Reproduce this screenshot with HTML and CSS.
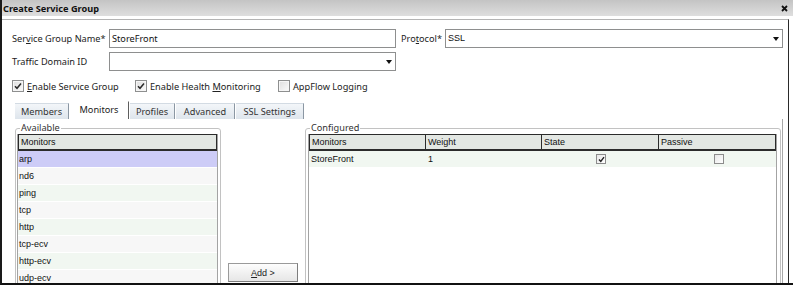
FILE: index.html
```html
<!DOCTYPE html>
<html lang="en">
<head>
    <meta charset="UTF-8">
    <title>Create Service Group</title>
    <link rel="stylesheet" href="styles.css">
</head>
<body>
    <div class="dialog">
        <div class="titlebar">
            <span class="title">Create Service Group</span>
            <svg class="close" width="7" height="7" viewBox="0 0 7 7"><path d="M1 1L6 6M6 1L1 6" stroke="#111" stroke-width="1.8"/></svg>
        </div>

        <div class="content">
            <div class="form-row">
                <label class="field-label">Ser<u>v</u>ice Group Name*</label>
                <div class="textbox name-box">StoreFront</div>
                <label class="proto-label">Pro<u>t</u>ocol*</label>
                <div class="textbox dropdown proto-box"><span class="ssl">SSL</span><span class="arrow"></span></div>
            </div>
            <div class="form-row">
                <label class="field-label">Traffic Domain ID</label>
                <div class="textbox dropdown domain-box"><span></span><span class="arrow"></span></div>
            </div>

            <div class="checks">
                <div class="check check-service">
                    <span class="checkbox"><svg width="8" height="8" viewBox="0 0 8 8"><path d="M1 4.2L3 6.3L7 1.5" fill="none" stroke="#2a2a2a" stroke-width="1.5"/></svg></span>
                    <span><u>E</u>nable Service Group</span>
                </div>
                <div class="check check-health">
                    <span class="checkbox"><svg width="8" height="8" viewBox="0 0 8 8"><path d="M1 4.2L3 6.3L7 1.5" fill="none" stroke="#2a2a2a" stroke-width="1.5"/></svg></span>
                    <span>Enable Health <u>M</u>onitoring</span>
                </div>
                <div class="check">
                    <span class="checkbox"></span>
                    <span>AppFlow Logging</span>
                </div>
            </div>

            <div class="tabs">
                <div class="tab tab-members">Members</div>
                <div class="tab tab-monitors active">Monitors</div>
                <div class="tab tab-profiles">Profiles</div>
                <div class="tab tab-advanced">Advanced</div>
                <div class="tab tab-ssl">SSL Settings</div>
            </div>

            <div class="tab-panel">
                <fieldset class="group available">
                    <legend>Available</legend>
                    <div class="list">
                        <div class="list-head"><span>Monitors</span></div>
                        <div class="list-body">
                            <div class="row selected">arp</div>
                            <div class="row">nd6</div>
                            <div class="row">ping</div>
                            <div class="row">tcp</div>
                            <div class="row">http</div>
                            <div class="row">tcp-ecv</div>
                            <div class="row">http-ecv</div>
                            <div class="row">udp-ecv</div>
                        </div>
                    </div>
                </fieldset>

                <div class="mid">
                    <button class="add-btn"><u>A</u>dd &gt;</button>
                </div>

                <fieldset class="group configured">
                    <legend>Configured</legend>
                    <div class="list">
                        <div class="grid-head">
                            <span>Monitors</span>
                            <span>Weight</span>
                            <span>State</span>
                            <span>Passive</span>
                        </div>
                        <div class="list-body">
                            <div class="row grid-row">
                                <span>StoreFront</span>
                                <span>1</span>
                                <span class="cell-check"><span class="mini-box"><svg width="7" height="7" viewBox="0 0 7 7"><path d="M1 3.6L2.8 5.5L6 1.2" fill="none" stroke="#222" stroke-width="1.4"/></svg></span></span>
                                <span class="cell-check"><span class="mini-box"></span></span>
                            </div>
                        </div>
                    </div>
                </fieldset>
            </div>
        </div>
    </div>
</body>
</html>
```

FILE: styles.css
```css
* {
    margin: 0;
    padding: 0;
    box-sizing: border-box;
}

body {
    width: 793px;
    height: 285px;
    overflow: hidden;
    background: #fff;
    font-family: "Noto Sans", sans-serif;
    font-size: 9.2px;
    color: #222;
}

u {
    text-decoration: underline;
    text-underline-offset: 1px;
}

.dialog {
    height: 285px;
    display: flex;
    flex-direction: column;
    border-left: 2px solid #1a1a1a;
    border-bottom: 2px solid #111;
    overflow: hidden;
}

.titlebar {
    height: 16px;
    flex: none;
    display: flex;
    align-items: center;
    justify-content: space-between;
    padding: 0 5px 0 1px;
    background: linear-gradient(#c4c4c4, #dedede);
}

.titlebar .title {
    font-weight: bold;
    color: #111;
}

.content {
    flex: 1;
    min-height: 0;
    display: flex;
    flex-direction: column;
    margin: 3px 4px 0 0;
    border-top: 1px solid #b4b4b4;
    border-right: 1px solid #2a2a2a;
    padding: 9px 5px 0 10px;
}

/* form fields */
.form-row {
    display: flex;
    align-items: center;
    height: 19px;
    flex: none;
}

.form-row + .form-row {
    margin-top: 4px;
}

.field-label {
    width: 97px;
    flex: none;
}

.textbox {
    height: 19px;
    border: 1px solid #8e8f8f;
    background: #fff;
    padding: 0 3px 0 2px;
    line-height: 17px;
    color: #111;
}

.name-box,
.domain-box {
    width: 287px;
    flex: none;
}

.proto-label {
    width: 49px;
    flex: none;
    padding-left: 5px;
}

.proto-box {
    flex: 1;
}

.dropdown {
    display: flex;
    align-items: center;
    justify-content: space-between;
}

.dropdown .arrow {
    width: 0;
    height: 0;
    border-left: 3.5px solid transparent;
    border-right: 3.5px solid transparent;
    border-top: 4px solid #111;
}

.ssl {
    font-family: "Liberation Sans", sans-serif;
    font-size: 9px;
}

/* checkboxes */
.checks {
    display: flex;
    align-items: center;
    height: 12px;
    margin-top: 9px;
    flex: none;
}

.check {
    display: flex;
    align-items: center;
    gap: 3px;
}

.check-service {
    width: 123px;
}

.check-health {
    width: 143px;
}

.checkbox {
    width: 12px;
    height: 12px;
    display: flex;
    align-items: center;
    justify-content: center;
    border: 1px solid #8e8f8f;
    background: linear-gradient(135deg, #dedede, #fbfbfb);
    box-shadow: inset 0 0 0 1px #f6f6f6;
}

/* tabs */
.tabs {
    display: flex;
    align-items: flex-end;
    gap: 1px;
    height: 18px;
    margin: 9px 0 0 3px;
    flex: none;
}

.tab {
    height: 16px;
    line-height: 15px;
    text-align: center;
    color: #333;
    background: linear-gradient(#f3f6f9, #dee5ec);
    border-top: 1px solid #d3dbe3;
    border-right: 1px solid #8b97a3;
}

.tab.active {
    height: 18px;
    line-height: 16px;
    background: #fff;
    border-top-color: #fff;
    border-right-color: #5e5e5e;
    color: #222;
}

.tab-members { width: 54px; }
.tab-monitors { width: 59px; }
.tab-profiles { width: 45px; }
.tab-advanced { width: 59px; }
.tab-ssl { width: 68px; }

.tab-panel {
    flex: 1;
    min-height: 0;
    display: flex;
    padding: 3px 1px 0 3px;
    border-right: 1px solid #a8a8a8;
    overflow: hidden;
}

/* group boxes */
.group {
    height: 220px;
    border: 1px solid #c2c2c2;
    border-radius: 3px;
    padding: 0 2px 0 1px;
    min-width: 0;
}

.group legend {
    margin-left: 3px;
    padding: 0 1px;
    line-height: 12px;
    color: #333;
}

.available {
    width: 206px;
    flex: none;
}

.configured {
    flex: 1;
    padding: 0 3px 0 2px;
}

.configured legend {
    margin-left: 2px;
}

.list {
    height: 300px;
    border: 1px solid #a3a3a3;
    border-top: none;
    font-family: "Liberation Sans", sans-serif;
    font-size: 9px;
    color: #111;
}

.list-head,
.grid-head {
    height: 17px;
    border: 1px solid #2b2b2b;
    border-bottom-width: 2px;
    background: #e3e7e3;
    line-height: 14px;
}

.list-head span {
    padding-left: 2px;
}

.grid-head {
    display: grid;
    grid-template-columns: 116px 116px 117px 1fr;
}

.grid-head span {
    padding-left: 2px;
    border-right: 1px solid #2b2b2b;
}

.grid-head span:last-child {
    border-right: none;
}

.row {
    height: 17px;
    line-height: 16px;
    padding-left: 1px;
    border-bottom: 1px solid #fff;
}

.row:nth-child(odd) {
    background: #f1f7f1;
}

.row:nth-child(even) {
    background: #f7f7f7;
}

.row.selected {
    background: #cdccf7;
}

.grid-row {
    display: grid;
    grid-template-columns: 117px 116px 117px 1fr;
    padding: 0 0 0 2px;
    align-items: center;
}

.cell-check {
    display: flex;
    justify-content: center;
}

.grid-row .cell-check:nth-child(3) {
    margin-left: -3px;
}

.mini-box {
    width: 10px;
    height: 10px;
    display: flex;
    align-items: center;
    justify-content: center;
    border: 1px solid #8c8c8c;
    background: linear-gradient(135deg, #e6e6e6, #fff);
}

/* add button column */
.mid {
    width: 84px;
    flex: none;
    display: flex;
    align-items: flex-end;
    justify-content: center;
    padding-bottom: 1px;
}

.add-btn {
    width: 70px;
    height: 19px;
    border: 1px solid #9a9a9a;
    border-right-color: #7d7d7d;
    border-bottom-color: #7d7d7d;
    background: linear-gradient(#fdfdfd, #e6e6e6);
    font-family: "Liberation Sans", sans-serif;
    font-size: 9px;
    color: #222;
}
```
